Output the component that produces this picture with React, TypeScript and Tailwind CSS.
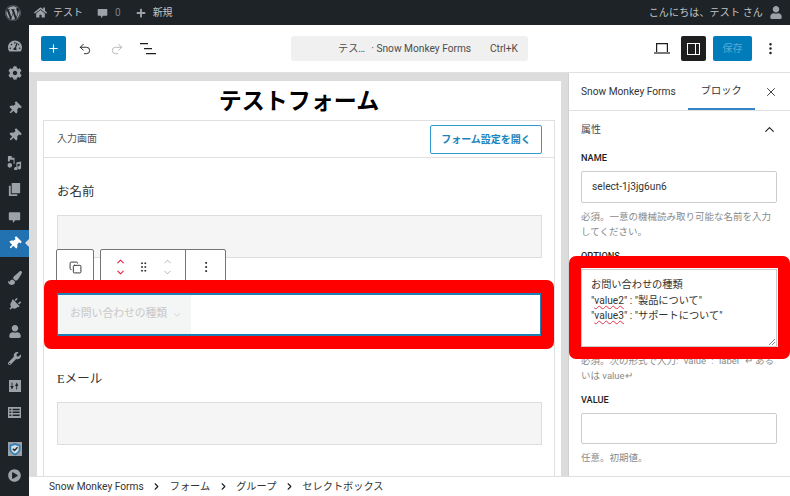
import { FaWordpress, FaHome, FaPlus, FaTachometerAlt, FaCog, FaThumbtack, FaPaintBrush, FaPlug, FaUser, FaWrench, FaPlayCircle } from 'react-icons/fa';
import { ChevronRight, ChevronUp, ChevronDown, X, Undo2, Redo2, MoreVertical, Plus, GripVertical, Copy } from 'lucide-react';

const font = "font-['Roboto','Noto_Sans_CJK_JP',sans-serif]";
const serif = "font-['Liberation_Serif','Noto_Sans_CJK_JP',serif]";

function Media() {
  return (
    <svg viewBox="0 0 16 16" className="w-[15px] h-[15px]" fill="currentColor">
      <path d="M1 1h4v2h3v6.5a3 3 0 0 0-1 .1V5H3v2H1zM3 8.5a2.5 2.5 0 1 1 0 5 2.5 2.5 0 0 1 0-5zM4.500 4h1v1h-1zM10 8l5-1v6.500a1.800 1.800 0 1 1-1.500-1.700V9.200l-2.300.5v5a1.800 1.800 0 1 1-1.200-1.700z" />
    </svg>
  );
}

function Pages() {
  return (
    <svg viewBox="0 0 16 16" className="w-[15px] h-[15px]" fill="currentColor">
      <path d="M5 1h9v11H5zM2 4h2v9h7v2H2z" />
    </svg>
  );
}

function Bubble() {
  return (
    <svg viewBox="0 0 16 16" className="w-full h-full" fill="currentColor">
      <path d="M2 2h12a1 1 0 0 1 1 1v8a1 1 0 0 1-1 1H9l-3 3.500V12H2a1 1 0 0 1-1-1V3a1 1 0 0 1 1-1z" />
    </svg>
  );
}

function Sliders() {
  return (
    <svg viewBox="0 0 14 14" className="w-[12px] h-[12px]" fill="currentColor">
      <path fillRule="evenodd" d="M0 0h14v14H0zM3 3v4H1.500L3.500 11 5.500 7H4V3zM9 3 7 7h1.500v4h1V7H11z" />
    </svg>
  );
}

function Table() {
  return (
    <svg viewBox="0 0 14 14" className="w-[13px] h-[13px]" fill="currentColor">
      <path fillRule="evenodd" d="M0 1h14v12H0zM1.500 3v1.500h2V3zM5 3v1.500h7.500V3zM1.500 6v1.500h2V6zM5 6v1.500h7.500V6zM1.500 9.200v1.500h2V9.200zM5 9.200v1.500h7.500V9.200z" />
    </svg>
  );
}

function Shield() {
  return (
    <svg viewBox="0 0 14 14" className="w-[14px] h-[14px]">
      <rect width="14" height="14" fill="#9aa0a5" />
      <path d="M7 1 12.500 3v4c0 3-2.500 5-5.500 6.500C4 12 1.500 10 1.500 7V3z" fill="#2f7fb8" />
      <path d="M7 3 10.800 4.300V7c0 2-1.700 3.500-3.800 4.500C4.900 10.500 3.200 9 3.200 7V4.300z" fill="#d5dde2" />
      <path d="M4.800 6.800 6.500 8.500 9.500 5.300" fill="none" stroke="#1d2327" strokeWidth="1.300" />
    </svg>
  );
}

function ListView() {
  return (
    <svg viewBox="0 0 16 12" className="w-[16px] h-[12px]" fill="#1e1e1e">
      <path d="M0 0h8v1.300H0zM4 5h8v1.300H4zM6 10h10v1.300H6z" />
    </svg>
  );
}

function LaptopIcon() {
  return (
    <svg viewBox="0 0 16 11" className="w-[16px] h-[11px]" fill="none" stroke="#1e1e1e" strokeWidth="1.200">
      <path d="M2.600 9V.6h10.800V9" />
      <path d="M0 10h16" />
    </svg>
  );
}

function SideIcon({ children, active }: { children: React.ReactNode; active?: boolean }) {
  return (
    <div className={`relative h-[27px] w-[29px] flex items-center justify-center ${active ? 'bg-[#2271b1] text-white' : 'text-[#9ca2a7]'}`}>
      {children}
      {active && <span className="absolute right-0 top-[9px] border-y-[4px] border-r-[4px] border-y-transparent border-r-[#dcdcdc]" />}
    </div>
  );
}

function AdminBar() {
  return (
    <div className="h-[25px] bg-[#1d2327] text-[#c3c4c7] flex items-center text-[10px] shrink-0">
      <FaWordpress className="ml-[5px] w-[16px] h-[16px] text-[#9ca2a7]" />
      <FaHome className="ml-[13px] w-[13px] h-[13px] text-[#9ca2a7]" />
      <span className="ml-[6px]">テスト</span>
      <span className="ml-[14px] w-[11px] h-[12px] text-[#9ca2a7]"><Bubble /></span>
      <span className="ml-[7px] text-[#7c8287]">0</span>
      <FaPlus className="ml-[15px] w-[10px] h-[10px] text-[#9ca2a7]" />
      <span className="ml-[7px]">新規</span>
      <span className="ml-auto tracking-[0.15px]">こんにちは、テスト さん</span>
      <FaUser className="ml-[7px] mr-[8px] w-[12px] h-[13px] text-[#9ca2a7]" />
    </div>
  );
}

function TopBar() {
  return (
    <div className="h-[48px] shrink-0 bg-white border-b border-[#e0e0e0] flex items-center pl-[12px] pr-[12px]">
      <div className="w-[25px] h-[25px] rounded-[2px] bg-[#007cba] flex items-center justify-center text-white">
        <Plus className="w-[13px] h-[13px]" strokeWidth={2} />
      </div>
      <Undo2 className="ml-[12px] w-[14px] h-[14px] text-[#1e1e1e]" strokeWidth={1.6} />
      <Redo2 className="ml-[18px] w-[14px] h-[14px] text-[#b4b4b4]" strokeWidth={1.6} />
      <div className="ml-[16px]"><ListView /></div>
      <div className="ml-[135px] w-[237px] h-[25px] rounded-[3px] bg-[#f0f0f0] flex items-center text-[10.200px] text-[#4d4d4d]">
        <span className="ml-[47px]">テス…</span>
        <span className="ml-[6px] whitespace-nowrap">· Snow Monkey Forms</span>
        <span className="ml-auto mr-[10px]">Ctrl+K</span>
      </div>
      <div className="ml-auto"><LaptopIcon /></div>
      <div className="ml-[11px] w-[25px] h-[25px] rounded-[2px] bg-[#1e1e1e] flex items-center justify-center">
        <span className="w-[13px] h-[12px] border border-white flex justify-end"><span className="w-[4px] border-l border-white bg-[#1e1e1e]" /></span>
      </div>
      <div className="ml-[7px] w-[39px] h-[25px] rounded-[2px] bg-[#007cba] flex items-center justify-center text-[10px] text-[#5aa9d4]">保存</div>
      <MoreVertical className="ml-[11px] w-[15px] h-[15px] text-[#1e1e1e]" strokeWidth={2} />
    </div>
  );
}

function BlockToolbar() {
  return (
    <div className="absolute left-[12px] top-[128px] h-[40px] flex gap-[6px] text-[#1e1e1e]">
      <div className="w-[38px] border border-[#757575] rounded-t-[2px] bg-white flex justify-center pt-[11px]">
        <Copy className="w-[13px] h-[13px]" strokeWidth={1.6} />
      </div>
      <div className="flex border border-[#757575] rounded-t-[2px] bg-white">
        <div className="w-[85px] border-r border-[#757575] flex pt-[6px]">
          <div className="ml-[12px] w-[14px] flex flex-col items-center text-[#e6173c]">
            <ChevronUp className="w-[13px] h-[11px]" strokeWidth={2.2} />
            <ChevronDown className="w-[13px] h-[11px]" strokeWidth={2.2} />
          </div>
          <GripVertical className="ml-[10px] mt-[4px] w-[13px] h-[14px]" strokeWidth={1.5} />
          <div className="ml-[10px] w-[14px] flex flex-col items-center text-[#8f8f8f]">
            <ChevronUp className="w-[13px] h-[11px]" strokeWidth={1.4} />
            <ChevronDown className="w-[13px] h-[11px]" strokeWidth={1.4} />
          </div>
        </div>
        <div className="w-[39px] flex justify-center pt-[10px]">
          <MoreVertical className="w-[14px] h-[14px]" strokeWidth={1.6} />
        </div>
      </div>
    </div>
  );
}

function Canvas() {
  return (
    <div className="flex-1 min-w-0 bg-[#dcdcdc] pl-[8px] pr-[7px] pt-[8px] border-r border-[#d0d0d0] overflow-hidden">
      <div className="h-full bg-white px-[6px]">
        <h1 className={`h-[39px] pt-[4px] flex items-center justify-center text-[23px] font-bold text-black ${serif}`}>テストフォーム</h1>
        <div className="relative border-x border-t border-[#e0e0e0] h-[400px]">
          <div className="h-[37px] border-b border-[#e0e0e0] flex items-center justify-between pl-[13px] pr-[12px]">
            <span className={`mb-[2px] text-[10px] text-[#555] ${serif}`}>入力画面</span>
            <span className="w-[112px] h-[29px] rounded-[2px] border border-[#2f9bd0] flex items-center justify-center text-[10px] font-bold text-[#1b83bd]">フォーム設定を開く</span>
          </div>
          <div className="pl-[13px] pr-[12px]">
            <p className={`mt-[25px] h-[19px] text-[12.500px] leading-[19px] text-[#333] ${serif}`}>お名前</p>
            <div className="mt-[13px] h-[43px] bg-[#f5f5f5] border border-[#ddd]" />
            <div className="-ml-[1px] mt-[35px] h-[43px] flex border-2 border-[#1e7fb5]">
              <div className="w-[133px] bg-[#f4f5f5] flex items-center pl-[12px] text-[10.800px] text-[#c8c8c8] whitespace-nowrap">
                お問い合わせの種類
                <ChevronDown className="ml-[5px] w-[10px] h-[10px] text-[#bbb]" strokeWidth={1.5} />
              </div>
            </div>
            <p className={`mt-[34px] h-[19px] text-[12.500px] leading-[19px] text-[#333] ${serif}`}>Eメール</p>
            <div className="mt-[13px] h-[43px] bg-[#f5f5f5] border border-[#ddd]" />
          </div>
          <BlockToolbar />
        </div>
      </div>
    </div>
  );
}

function Inspector() {
  return (
    <div className="w-[221px] shrink-0 bg-white text-[#1e1e1e] overflow-hidden">
      <div className="h-[38px] border-b border-[#e0e0e0] flex items-center text-[10.200px] text-[#333]">
        <span className="ml-[12px] mt-[1px] whitespace-nowrap">Snow Monkey Forms</span>
        <span className="ml-[12px] w-[67px] h-[37px] pt-[1px] flex items-center justify-center border-b-2 border-[#3582c4]">ブロック</span>
        <X className="ml-[9px] w-[14px] h-[14px]" strokeWidth={1.6} />
      </div>
      <div className="px-[12px]">
        <div className="mt-[10px] h-[16px] flex items-center justify-between text-[10px] text-[#444]">
          <span>属性</span>
          <ChevronUp className="mr-[1px] w-[15px] h-[15px] text-[#1e1e1e]" strokeWidth={1.8} />
        </div>
        <p className="mt-[14px] h-[14px] leading-[14px] text-[9.200px] font-medium">NAME</p>
        <div className="mt-[6px] w-[196px] h-[32px] border border-[#ccc] rounded-[2px] flex items-center pl-[10px] text-[10.200px] text-[#333]">select-1j3jg6un6</div>
        <p className="mt-[6px] w-[196px] text-[9.500px] leading-[15px] text-[#8a8a8a]">必須。一意の機械読み取り可能な名前を入力してください。</p>
        <p className="mt-[10px] h-[14px] leading-[14px] text-[9.200px] font-medium">OPTIONS</p>
        <div className="relative mt-[6px] w-[196px] h-[78px] border border-[#ccc] pl-[9px] pt-[7px] text-[10.200px] leading-[15.500px] text-[#333]">
          <p>お問い合わせの種類</p>
          <p>"<span className="underline decoration-wavy decoration-[#e0324c] decoration-1">value2</span>" : "製品について"</p>
          <p>"<span className="underline decoration-wavy decoration-[#e0324c] decoration-1">value3</span>" : "サポートについて"</p>
          <svg viewBox="0 0 6 6" className="absolute right-[1px] bottom-[1px] w-[6px] h-[6px]" stroke="#666" strokeWidth="0.8">
            <path d="M6 0 0 6M6 3 3 6" />
          </svg>
        </div>
        <p className="mt-[6px] w-[196px] text-[9.500px] leading-[15px] text-[#8a8a8a]">必須。次の形式で入力: "value" : "label" ↵ あるいは value↵</p>
        <p className="mt-[10px] h-[14px] leading-[14px] text-[9.200px] font-medium">VALUE</p>
        <div className="mt-[6px] w-[196px] h-[31px] border border-[#ccc] rounded-[2px]" />
        <p className="mt-[6px] text-[9.500px] leading-[15px] text-[#8a8a8a]">任意。初期値。</p>
      </div>
    </div>
  );
}

function Breadcrumbs() {
  const items = ['フォーム', 'グループ', 'セレクトボックス'];
  return (
    <div className="h-[20px] shrink-0 bg-white border-t border-[#e0e0e0] flex items-center pl-[20px] text-[10.200px] text-[#333] whitespace-nowrap">
      <span>Snow Monkey Forms</span>
      {items.map(item => (
        <span key={item} className="flex items-center">
          <ChevronRight className="mx-[7.500px] w-[11px] h-[11px] text-[#1e1e1e]" strokeWidth={2.4} />
          {item}
        </span>
      ))}
    </div>
  );
}

export default function App() {
  return (
    <div className={`relative w-[790px] h-[496px] overflow-hidden flex flex-col ${font}`}>
      <AdminBar />
      <div className="flex flex-1 min-h-0">
        <div className="w-[29px] shrink-0 bg-[#1d2327] pt-[7px]">
          <SideIcon><FaTachometerAlt className="w-[14px] h-[14px]" /></SideIcon>
          <SideIcon><FaCog className="w-[14px] h-[14px]" /></SideIcon>
          <div className="h-[9px]" />
          <SideIcon><FaThumbtack className="w-[13px] h-[13px] rotate-45" /></SideIcon>
          <SideIcon><FaThumbtack className="w-[13px] h-[13px] rotate-45" /></SideIcon>
          <SideIcon><Media /></SideIcon>
          <SideIcon><Pages /></SideIcon>
          <SideIcon><span className="w-[13px] h-[14px]"><Bubble /></span></SideIcon>
          <SideIcon active><FaThumbtack className="w-[13px] h-[13px] rotate-45" /></SideIcon>
          <div className="h-[7px]" />
          <SideIcon><FaPaintBrush className="w-[14px] h-[14px]" /></SideIcon>
          <SideIcon><FaPlug className="w-[13px] h-[13px] rotate-45" /></SideIcon>
          <SideIcon><FaUser className="w-[12px] h-[13px]" /></SideIcon>
          <SideIcon><FaWrench className="w-[13px] h-[13px]" /></SideIcon>
          <SideIcon><Sliders /></SideIcon>
          <SideIcon><Table /></SideIcon>
          <div className="h-[9px]" />
          <SideIcon><Shield /></SideIcon>
          <SideIcon><FaPlayCircle className="w-[13px] h-[13px]" /></SideIcon>
        </div>
        <div className="flex-1 min-w-0 flex flex-col">
          <TopBar />
          <div className="flex flex-1 min-h-0">
            <Canvas />
            <Inspector />
          </div>
          <Breadcrumbs />
        </div>
      </div>
      {/* red annotation frames */}
      <div className="absolute left-[44px] top-[280px] w-[510px] h-[69px] border-[13px] border-[#f00] rounded-[7px] pointer-events-none" />
      <div className="absolute left-[569px] top-[256px] w-[221px] h-[103px] border-[12px] border-[#f00] rounded-[7px] pointer-events-none" />
    </div>
  );
}
